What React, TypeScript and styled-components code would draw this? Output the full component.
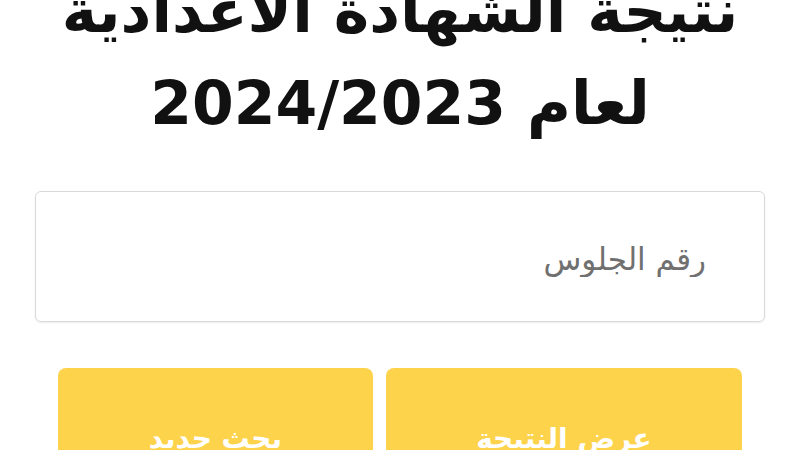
import React from "react";
import styled, { createGlobalStyle } from "styled-components";

const GlobalStyle = createGlobalStyle`
  html, body {
    margin: 0;
    padding: 0;
    background: #ffffff;
    overflow: hidden;
  }
  body {
    font-family: "DejaVu Sans", "Noto Sans", sans-serif;
  }
`;

const Page = styled.div`
  width: 800px;
  height: 450px;
  overflow: hidden;
  direction: rtl;
  display: flex;
  flex-direction: column;
  background: #ffffff;
  & > * {
    flex-shrink: 0;
  }
`;

const Title = styled.h1`
  margin: -35px 0 0;
  font-family: "DejaVu Sans", sans-serif;
  font-size: 60px;
  line-height: 92px;
  font-weight: 700;
  color: #111111;
  text-align: center;
  white-space: nowrap;
`;

const Field = styled.div`
  margin: 42px 35px 0;
  height: 131px;
  border: 1px solid #d9d9d9;
  border-radius: 6px;
  box-shadow: 0 1px 2px rgba(0, 0, 0, 0.08);
  display: flex;
  align-items: center;
  box-sizing: border-box;
`;

const Input = styled.input`
  flex: 1;
  border: none;
  outline: none;
  background: transparent;
  direction: rtl;
  padding: 0 58px;
  margin-top: 4px;
  font-family: "DejaVu Sans", sans-serif;
  font-size: 31px;
  color: #333333;
  &::placeholder {
    color: #707070;
  }
`;

const Actions = styled.div`
  display: flex;
  gap: 13px;
  margin: 46px 58px 0;
`;

const Button = styled.button<{ $grow: number }>`
  flex: ${(p) => p.$grow};
  height: 110px;
  border: none;
  border-radius: 8px;
  background: #fdd34b;
  color: #ffffff;
  font-family: "DejaVu Sans", sans-serif;
  font-size: 28px;
  font-weight: 700;
  display: flex;
  align-items: flex-start;
  justify-content: center;
  padding-top: 54px;
  cursor: pointer;
`;

export default function App() {
  return (
    <>
      <GlobalStyle />
      <Page>
        <Title>
          نتيجة الشهادة الاعدادية
          <br />
          لعام 2024/2023
        </Title>
        <Field>
          <Input placeholder="رقم الجلوس" />
        </Field>
        <Actions>
          <Button $grow={357}>عرض النتيجة</Button>
          <Button $grow={314}>بحث جديد</Button>
        </Actions>
      </Page>
    </>
  );
}
